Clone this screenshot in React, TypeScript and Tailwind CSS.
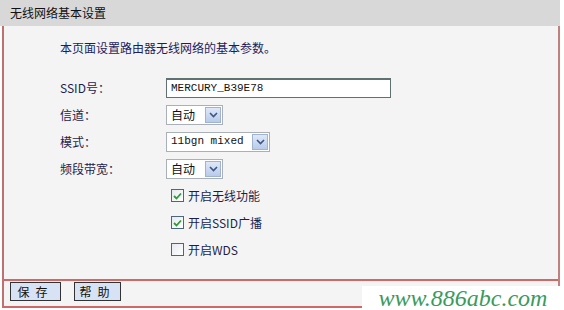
import React from 'react';

const FONT = "font-['SimSun','Noto_Sans_CJK_SC',sans-serif]";

const Arrow = () => (
  <span className="flex h-[16px] w-[16px] items-center justify-center border border-[#9fb3d3] bg-gradient-to-b from-[#dfe8f7] to-[#b9cbe9]">
    <svg width="9" height="6" viewBox="0 0 9 6">
      <path d="M1 1 L4.5 4.5 L8 1" fill="none" stroke="#3b5588" strokeWidth="1.6" />
    </svg>
  </span>
);

const Select = ({ value, width, mono }: { value: string; width: string; mono?: boolean }) => (
  <div className={`flex h-[20px] items-center justify-between border border-[#a9b0b8] bg-white pl-[4px] pr-[1px] ${width}`}>
    <span className={mono ? "font-['Liberation_Mono',monospace] text-[11px] text-[#111]" : 'text-[12px] text-[#111]'}>{value}</span>
    <Arrow />
  </div>
);

const Check = ({ checked, label }: { checked: boolean; label: string }) => (
  <div className="flex h-[27px] items-center pl-[5px]">
    <span className="flex h-[13px] w-[13px] items-center justify-center border border-[#4a6680] bg-gradient-to-br from-[#e6eaee] to-white">
      {checked && (
        <svg width="9" height="8" viewBox="0 0 9 8">
          <path d="M1 4 L3.5 6.5 L8 1.5" fill="none" stroke="#2f9a3a" strokeWidth="1.8" />
        </svg>
      )}
    </span>
    <span className="ml-[4px] text-[12px] text-[#1d1d4e]">{label}</span>
  </div>
);

const Row = ({ label, children }: { label: string; children: React.ReactNode }) => (
  <div className="flex h-[27px] items-center">
    <span className="w-[106px] text-[12px] text-[#1d1d4e]">{label}</span>
    {children}
  </div>
);

const App: React.FC = () => {
  return (
    <div className={`relative h-[310px] w-[564px] overflow-hidden bg-white ${FONT}`}>
      <div className="w-[560px]">
        <div className="flex h-[26px] items-center bg-[#d8d8d8] pl-[10px] text-[12px] text-[#111]">无线网络基本设置</div>
        <div className="ml-[2px] border-l-2 border-r-2 border-l-[#c07070] border-r-[#c08080]">
          <div className="h-[253px] bg-[#f4f4f4] pl-[56px] pt-[14px]">
            <div className="h-[34px] text-[12px] leading-[16px] text-[#1d1d5e]">本页面设置路由器无线网络的基本参数。</div>
            <Row label="SSID号：">
              <div className="flex h-[20px] w-[225px] items-center border border-[#5f7272] border-t-2 bg-white pl-[4px] font-['Liberation_Mono',monospace] text-[11px] text-[#111]">
                MERCURY_B39E78
              </div>
            </Row>
            <Row label="信道：">
              <Select value="自动" width="w-[57px]" />
            </Row>
            <Row label="模式：">
              <Select value="11bgn mixed" width="w-[104px]" mono />
            </Row>
            <Row label="频段带宽：">
              <Select value="自动" width="w-[57px]" />
            </Row>
            <div className="pl-[106px]">
              <Check checked label="开启无线功能" />
              <Check checked label="开启SSID广播" />
              <Check checked={false} label="开启WDS" />
            </div>
          </div>
          <div className="h-[29px] border-t-2 border-b-2 border-[#d06868] bg-[#f4f4f4]">
            <div className="flex gap-[13px] pl-[6px] pt-[1px]">
              <button className="h-[19px] w-[51px] border border-[#333] bg-[#d7e3f5] text-[12px] tracking-[6px] text-[#111]">保存</button>
              <button className="h-[19px] w-[47px] border border-[#333] bg-[#d7e3f5] text-[12px] tracking-[6px] text-[#111]">帮助</button>
            </div>
          </div>
        </div>
      </div>
      <div className="absolute bottom-0 left-[362px] flex h-[24px] w-[202px] items-center justify-center bg-white font-['Liberation_Serif',serif] text-[24px] italic leading-none text-[#3a9a5c]">
        www.886abc.com
      </div>
    </div>
  );
};

export default App;
